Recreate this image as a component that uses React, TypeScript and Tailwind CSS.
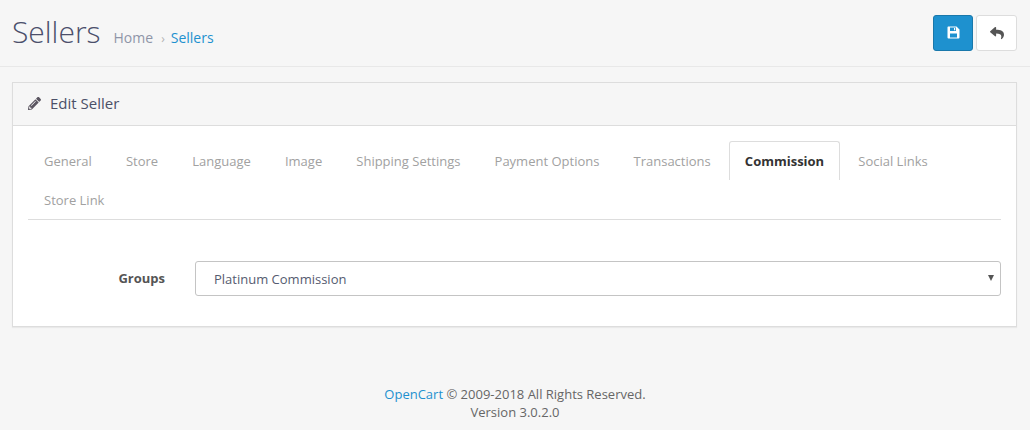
import React from "react";
import { FaPencilAlt, FaReply } from "react-icons/fa";

const tabs = ["General", "Store", "Language", "Image", "Shipping Settings", "Payment Options", "Transactions", "Commission", "Social Links", "Store Link"];

function SaveIcon() {
  return (
    <svg width="13" height="13" viewBox="0 0 13 13" className="block">
      <path
        fill="currentColor"
        fillRule="evenodd"
        d="M1 .5h8.5L12.5 3.5V11.5a1 1 0 0 1-1 1h-10a1 1 0 0 1-1-1V1.5a1 1 0 0 1 .5-1ZM3 1.5V5h6V1.5ZM7 2h1.2v2.2H7ZM3 7.5V11.5h7V7.5Z"
      />
    </svg>
  );
}

export default function App() {
  return (
    <div className="min-h-[430px] bg-[#f6f6f6] text-[#666] text-[13px] font-['Open_Sans',sans-serif]">
      <header className="h-[67px] border-b border-[#e8e8e8] flex items-center justify-between pl-3 pr-[13px]">
        <div className="flex items-baseline -mt-[2px]">
          <h1 className="text-[30px] font-light leading-[34px] text-[#4b4f6b]">Sellers</h1>
          <nav className="flex items-baseline ml-[13px] text-[14px]">
            <span className="text-[#8f95a8]">Home</span>
            <span className="text-[#b3b3b3] text-[12px] ml-[8px] mr-[6px]">›</span>
            <span className="text-[#1e91cf]">Sellers</span>
          </nav>
        </div>
        <div className="flex gap-[3px] -mt-[1px]">
          <button className="w-10 h-9 flex items-center justify-center rounded-[3px] bg-[#1e91cf] border border-[#1978ab] text-white">
            <SaveIcon />
          </button>
          <button className="w-[41px] h-9 flex items-center justify-center rounded-[3px] bg-white border border-[#dddddd] text-[#555]">
            <FaReply className="w-[14px] h-[14px]" />
          </button>
        </div>
      </header>
      <div className="pt-[15px] px-3 pr-[13px]">
        <section className="border border-[#dddddd] bg-white shadow-[0_1px_1px_rgba(0,0,0,0.05)]">
          <div className="h-[43px] bg-[#f6f6f6] border-b border-[#dddddd] flex items-center pl-[15px] gap-[9px] text-[#4b5068] text-[15px] pb-[2px]">
            <FaPencilAlt className="w-[13px] h-[13px] text-[#5a5560] mt-[1px]" />
            <span>Edit Seller</span>
          </div>
          <div className="pt-[15px] px-[15px] pb-[30px]">
            <ul className="flex flex-wrap gap-x-[2.1px] border-b border-[#dddddd] mb-[41px]">
              {tabs.map((t) => {
                const active = t === "Commission";
                return (
                  <li
                    key={t}
                    className={
                      active
                        ? "h-[39px] flex items-center pt-[2px] px-[15px] border border-b-0 border-[#dddddd] rounded-t-[3px] font-bold text-[#333] bg-white"
                        : "h-[39px] flex items-center pt-[2px] px-4 text-[#a1a1a1]"
                    }
                  >
                    {t}
                  </li>
                );
              })}
            </ul>
            <div className="flex items-center">
              <label className="w-[167px] pr-[30px] text-right font-bold text-[#555]">Groups</label>
              <div className="relative flex-1">
                <select
                  defaultValue="Platinum Commission"
                  className="block w-full h-[35px] pl-[18px] pt-[2px] bg-white border border-[#c4c4c4] rounded-[3px] text-[#555b70] text-[13px] appearance-none"
                >
                  <option>Platinum Commission</option>
                </select>
                <span className="absolute right-[7px] top-[14px] w-0 h-0 border-x-[3px] border-x-transparent border-t-[6px] border-t-[#555] pointer-events-none" />
              </div>
            </div>
          </div>
        </section>
      </div>
      <footer className="pt-[58px] text-center leading-[18px] text-[#666]">
        <div><span className="text-[#1e91cf]">OpenCart</span> © 2009-2018 All Rights Reserved.</div>
        <div>Version 3.0.2.0</div>
      </footer>
    </div>
  );
}
